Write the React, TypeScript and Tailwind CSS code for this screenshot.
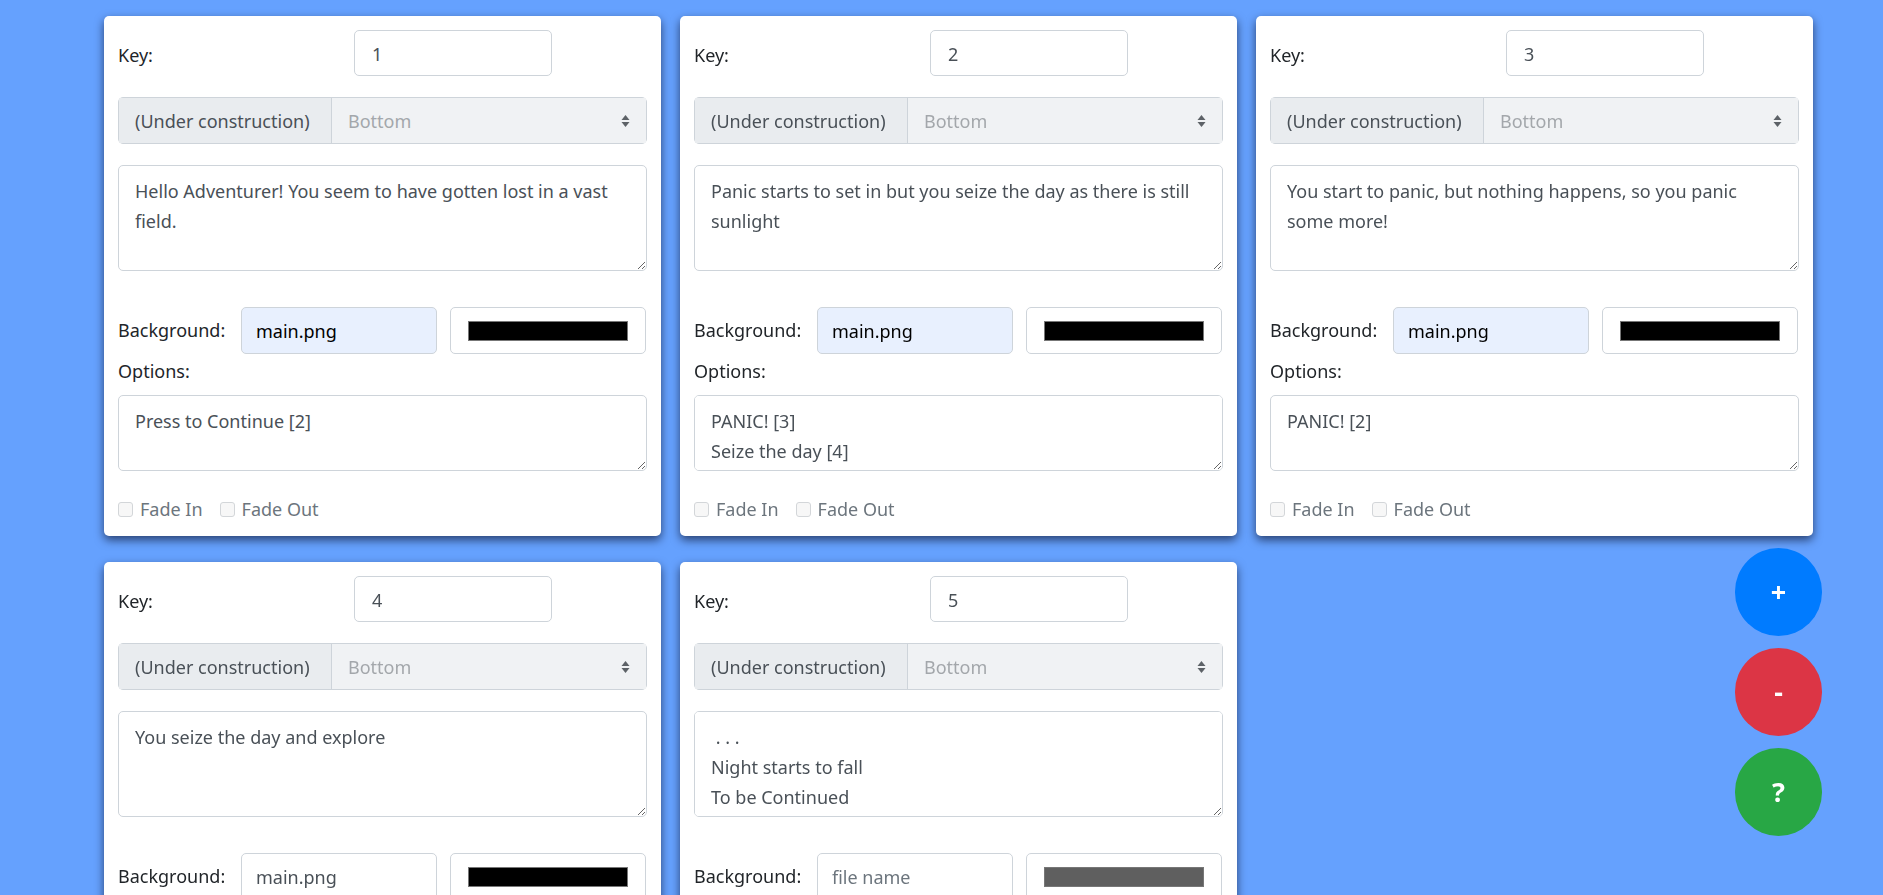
import React from "react";

type Scene = {
  id: string;
  text: string;
  options: string;
  file: string;
  autofill: boolean;
  color: string;
};

const scenes: Scene[] = [
  {
    id: "1",
    text: "Hello Adventurer! You seem to have gotten lost in a vast field.",
    options: "Press to Continue [2]",
    file: "main.png",
    autofill: true,
    color: "#000000",
  },
  {
    id: "2",
    text: "Panic starts to set in but you seize the day as there is still sunlight",
    options: "PANIC! [3]\nSeize the day [4]",
    file: "main.png",
    autofill: true,
    color: "#000000",
  },
  {
    id: "3",
    text: "You start to panic, but nothing happens, so you panic some more!",
    options: "PANIC! [2]",
    file: "main.png",
    autofill: true,
    color: "#000000",
  },
  {
    id: "4",
    text: "You seize the day and explore",
    options: "",
    file: "main.png",
    autofill: false,
    color: "#000000",
  },
  {
    id: "5",
    text: " . . .\nNight starts to fall\nTo be Continued",
    options: "",
    file: "",
    autofill: false,
    color: "#5f5f5f",
  },
];

const font = { fontFamily: '"Noto Sans", "Open Sans", sans-serif' };

const Area = ({ value, h }: { value: string; h: string }) => (
  <textarea
    readOnly
    value={value}
    className={`block w-full ${h} resize-y rounded-[5px] border border-[#ced4da] bg-white px-[16px] py-[10px] text-[18px] leading-[30px] text-[#495057] outline-none`}
  />
);

const Check = ({ label }: { label: string }) => (
  <div className="flex items-center gap-[7px]">
    <span className="h-[15px] w-[15px] rounded-[3px] border border-[#d3d6d9] bg-[#f7f7f7]" />
    <span className="text-[#6c757d]">{label}</span>
  </div>
);

const SceneCard = ({ s }: { s: Scene }) => (
  <div className="w-[557px] rounded-[5px] bg-white px-[14px] pt-[14px] pb-[15px] text-[18px] text-[#212529] shadow-[0_4px_10px_rgba(0,0,20,0.6)]">
    <div className="flex h-[46px] items-center">
      <span className="w-[236px] pt-[4px]">Key:</span>
      <div className="flex h-[46px] w-[198px] items-center rounded-[5px] border border-[#ced4da] px-[17px] pt-[2px] text-[#495057]">
        {s.id}
      </div>
    </div>

    <div className="mt-[21px] flex h-[47px] rounded-[5px] border border-[#ced4da]">
      <div className="flex w-[213px] items-center border-r border-[#ced4da] bg-[#e9ecef] px-[16px] pt-[2px] text-[#495057]">
        (Under construction)
      </div>
      <div className="flex flex-1 items-center justify-between bg-[#f0f2f4] pl-[16px] pr-[16px] text-[#a3a7ab]">
        <span className="pt-[2px]">Bottom</span>
        <svg width="9" height="14" viewBox="0 0 9 14">
          <path d="M4.5 1 L8.5 6 H0.5 Z" fill="#5d6267" />
          <path d="M4.5 13 L8.5 8 H0.5 Z" fill="#5d6267" />
        </svg>
      </div>
    </div>

    <div className="mt-[21px]">
      <Area value={s.text} h="h-[106px]" />
    </div>

    <div className="mt-[36px] flex h-[47px] items-center">
      <span className="w-[123px]">Background:</span>
      <div
        className={`flex h-[47px] w-[196px] items-center rounded-[5px] border border-[#ced4da] px-[14px] pt-[2px] ${
          s.autofill ? "bg-[#e8f0fe] text-[#000000]" : "bg-white text-[#495057]"
        }`}
      >
        {s.file ? s.file : <span className="text-[#6c757d]">file name</span>}
      </div>
      <div className="ml-[13px] flex h-[47px] w-[196px] items-center justify-center rounded-[5px] border border-[#ced4da] bg-white">
        <div
          className="h-[20px] w-[160px] border border-[#777777]"
          style={{ backgroundColor: s.color }}
        />
      </div>
    </div>

    <div className="pt-[3px] pb-[9px] leading-[29px]">Options:</div>
    <Area value={s.options} h="h-[76px]" />

    <div className="mt-[26px] flex h-[24px] items-center gap-[17px]">
      <Check label="Fade In" />
      <Check label="Fade Out" />
    </div>
  </div>
);

const Fab = ({ label, bg }: { label: string; bg: string }) => (
  <button
    className={`flex h-[88px] w-[87px] items-center justify-center rounded-full ${bg} text-[27px] font-bold text-white`}
  >
    {label}
  </button>
);

export default function App() {
  return (
    <div className="min-h-screen bg-[#65a1fe] pl-[104px] pt-[16px] pb-[30px]" style={font}>
      <div className="flex w-[1709px] flex-wrap gap-x-[19px] gap-y-[26px]">
        {scenes.map((s) => (
          <SceneCard key={s.id} s={s} />
        ))}
      </div>

      <div className="fixed right-[61px] top-[548px] flex flex-col gap-[12px]">
        <Fab label="+" bg="bg-[#007bff]" />
        <Fab label="-" bg="bg-[#dc3545]" />
        <Fab label="?" bg="bg-[#28a745]" />
      </div>
    </div>
  );
}
